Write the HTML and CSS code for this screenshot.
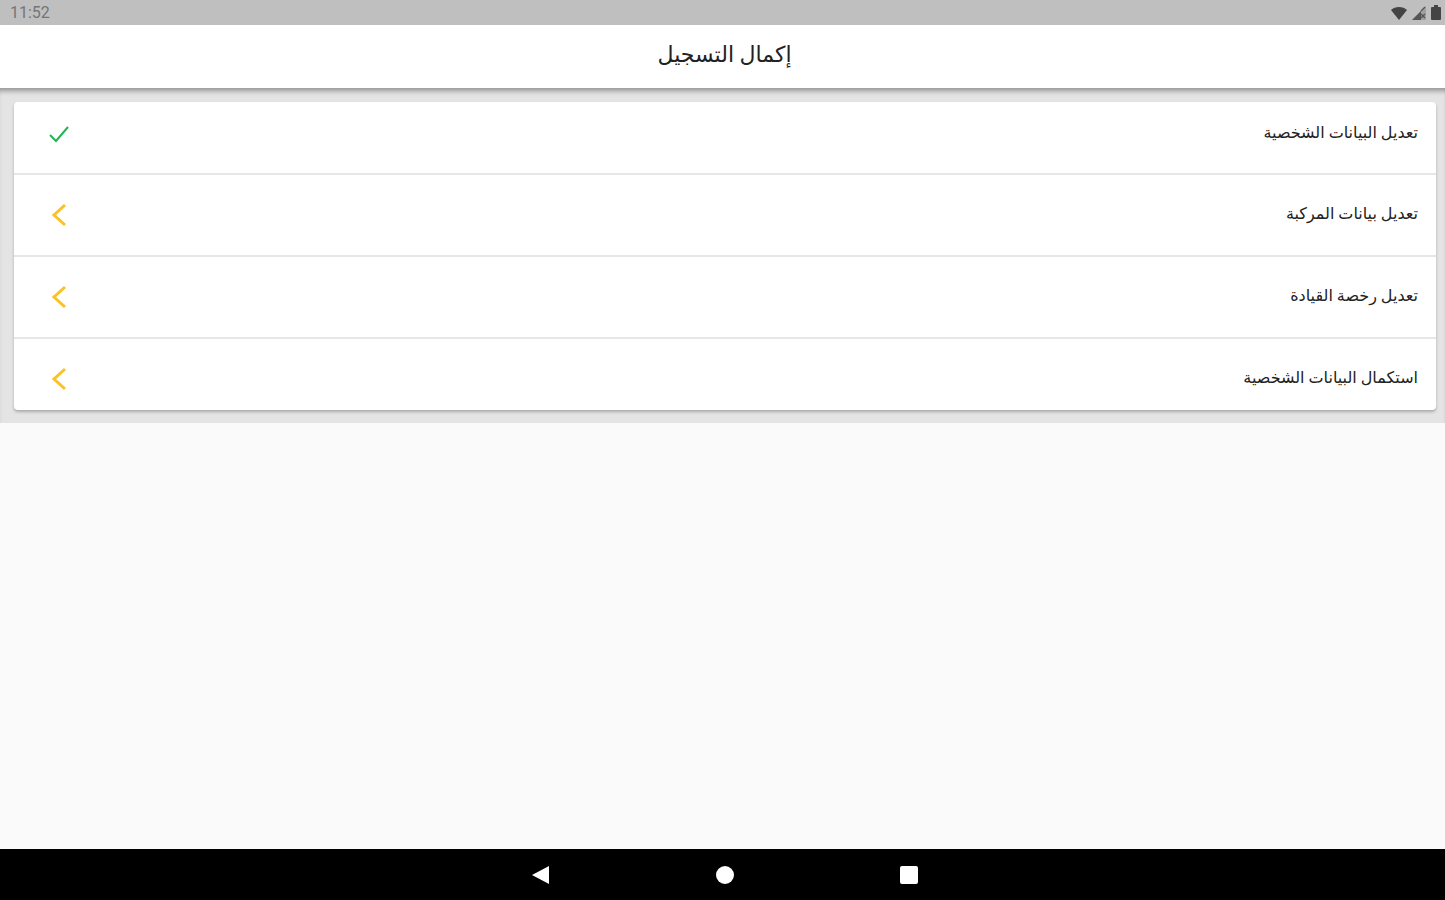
FILE: index.html
```
<!DOCTYPE html>
<html lang="ar" dir="rtl">
<head>
<meta charset="utf-8">
<meta name="viewport" content="width=device-width, initial-scale=1">
<title>إكمال التسجيل</title>
<link rel="stylesheet" href="styles.css">
</head>
<body>
<div class="status-bar" dir="ltr">
  <span class="clock">11:52</span>
  <div class="status-icons">
    <svg width="16" height="14" viewBox="0 0 16 14"><path d="M0 4C4 0 12 0 16 4L8 14Z" fill="#444"/></svg>
    <svg width="14" height="14" viewBox="0 0 14 14"><path d="M14 0V14H0Z" fill="#a0a0a0"/><path d="M9 5V14H0Z" fill="#555"/><path d="M9 5L13 1M9 8L13 12M13 8L9 12" stroke="#555" stroke-width="1.3"/></svg>
    <svg width="10" height="15" viewBox="0 0 10 15"><path d="M3 0H7V2H9Q10 2 10 3V14Q10 15 9 15H1Q0 15 0 14V3Q0 2 1 2H3Z" fill="#444"/></svg>
  </div>
</div>
<header class="header">
  <h1>إكمال التسجيل</h1>
</header>
<main>
  <div class="panel">
    <div class="card">
      <button class="row" type="button">
        <span>تعديل البيانات الشخصية</span>
        <svg class="done" width="24" height="24" viewBox="0 0 24 24"><path d="M3 13L9 19L21 5"/></svg>
      </button>
      <button class="row" type="button">
        <span>تعديل بيانات المركبة</span>
        <svg class="todo" width="24" height="24" viewBox="0 0 24 24"><path d="M18 2L7 12L18 22"/></svg>
      </button>
      <button class="row" type="button">
        <span>تعديل رخصة القيادة</span>
        <svg class="todo" width="24" height="24" viewBox="0 0 24 24"><path d="M18 2L7 12L18 22"/></svg>
      </button>
      <button class="row" type="button">
        <span>استكمال البيانات الشخصية</span>
        <svg class="todo" width="24" height="24" viewBox="0 0 24 24"><path d="M18 2L7 12L18 22"/></svg>
      </button>
    </div>
  </div>
</main>
<nav class="nav-bar" dir="ltr">
  <button type="button" aria-label="رجوع"><svg width="20" height="20" viewBox="0 0 20 20"><path d="M1 10L18 1V19Z"/></svg></button>
  <button type="button" aria-label="الرئيسية"><svg width="20" height="20" viewBox="0 0 20 20"><circle cx="10" cy="10" r="9"/></svg></button>
  <button type="button" aria-label="التطبيقات"><svg width="20" height="20" viewBox="0 0 20 20"><rect x="1" y="1" width="18" height="18" rx="2"/></svg></button>
</nav>
</body>
</html>
```
FILE: styles.css
```
* {
  box-sizing: border-box;
}

body {
  margin: 0;
  min-height: 100vh;
  display: flex;
  flex-direction: column;
  background: #fafafa;
  color: #222;
  font-family: Roboto, "DejaVu Sans", sans-serif;
}

button {
  border: 0;
  margin: 0;
  background: none;
  color: inherit;
  font: inherit;
  cursor: pointer;
}

svg {
  display: block;
}

/* system bar */
.status-bar {
  height: 25px;
  padding: 0 4px 0 10px;
  display: flex;
  align-items: center;
  justify-content: space-between;
  background: #bfbfbf;
}

.clock {
  color: #757575;
  font-size: 16px;
}

.status-icons {
  display: flex;
  align-items: center;
  gap: 5px;
}

.header {
  height: 63px;
  padding: 0 0 4px 4px;
  display: flex;
  align-items: center;
  justify-content: center;
  background: #fff;
}

.header h1 {
  margin: 0;
  font-size: 22px;
  font-weight: normal;
}

main {
  flex: 1;
}

/* the top inset is the header's shadow */
.panel {
  padding: 14px 9px 13px 14px;
  background: #e4e4e4;
  box-shadow: inset 0 6px 5px -3px rgba(0, 0, 0, 0.35);
}

/* list of steps */
.card {
  overflow: hidden;
  border-radius: 4px;
  background: #fff;
  box-shadow: 0 2px 3px rgba(0, 0, 0, 0.25);
}

.row {
  width: 100%;
  padding: 28px 18px 28px 33px;
  display: flex;
  align-items: center;
  justify-content: space-between;
  font-size: 16px;
  line-height: 22px;
}

.row:first-child {
  padding-top: 20px;
  padding-bottom: 27px;
}

.row:last-child {
  padding-bottom: 19px;
}

.row + .row {
  border-top: 2px solid #e6e6e6;
}

.row span {
  padding-bottom: 2px;
}

.row svg {
  fill: none;
  stroke-width: 2;
}

.row .done {
  stroke: #22b455;
}

.row .todo {
  stroke: #fcc125;
  stroke-width: 3;
}

.nav-bar {
  height: 51px;
  padding-left: 4px;
  display: flex;
  justify-content: center;
  background: #000;
}

.nav-bar button {
  width: 184px;
  display: flex;
  align-items: center;
  justify-content: center;
}

.nav-bar svg {
  fill: #fff;
}
```
